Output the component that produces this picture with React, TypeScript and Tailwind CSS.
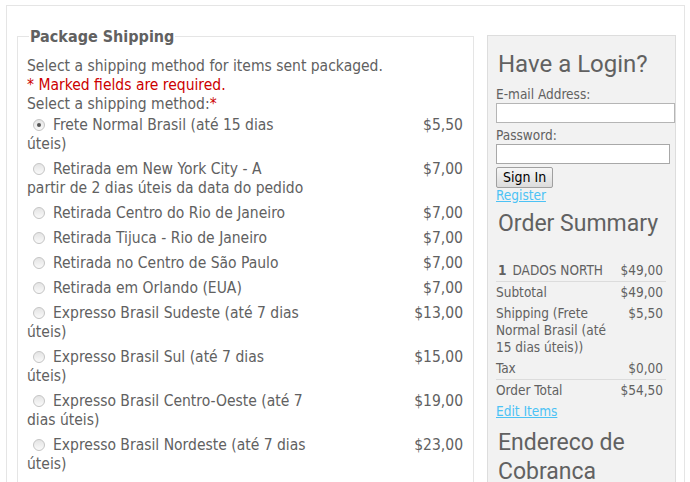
const options = [
  { lines: ["Frete Normal Brasil (até 15 dias", "úteis)"], price: "$5,50", checked: true },
  { lines: ["Retirada em New York City - A", "partir de 2 dias úteis da data do pedido"], price: "$7,00" },
  { lines: ["Retirada Centro do Rio de Janeiro"], price: "$7,00" },
  { lines: ["Retirada Tijuca - Rio de Janeiro"], price: "$7,00" },
  { lines: ["Retirada no Centro de São Paulo"], price: "$7,00" },
  { lines: ["Retirada em Orlando (EUA)"], price: "$7,00" },
  { lines: ["Expresso Brasil Sudeste (até 7 dias", "úteis)"], price: "$13,00" },
  { lines: ["Expresso Brasil Sul (até 7 dias", "úteis)"], price: "$15,00" },
  { lines: ["Expresso Brasil Centro-Oeste (até 7", "dias úteis)"], price: "$19,00" },
  { lines: ["Expresso Brasil Nordeste (até 7 dias", "úteis)"], price: "$23,00" },
];

function Radio({ checked }: { checked?: boolean }) {
  return (
    <span className="relative inline-block align-[-1px] ml-[6px] mr-[8px] w-[12px] h-[12px] rounded-full border border-[#c4c4c4] bg-gradient-to-b from-[#e4e4e4] to-[#fafafa]">
      {checked && (
        <span className="absolute left-[3px] top-[3px] w-[4px] h-[4px] rounded-full bg-[#555]" />
      )}
    </span>
  );
}

const heading = { fontFamily: 'Roboto, "Liberation Sans", sans-serif' };

export default function App() {
  return (
    <div
      className="bg-white w-[690px] h-[482px] overflow-hidden text-[#616161]"
      style={{ fontFamily: '"DejaVu Sans Condensed", "Liberation Sans", sans-serif' }}
    >
      <div className="ml-[6px] mt-[5px] w-[679px] h-[500px] border border-[#e5e5e5] flex items-start pl-[10px] pt-[21px]">
        {/* shipping methods */}
        <fieldset className="w-[457px] border border-[#e5e5e5] pl-[9px] pr-[10px] pb-[10px]">
          <legend className="ml-[2px] px-[1px] text-[16px] leading-[19px] font-bold">Package Shipping</legend>
          <div className="text-[15.5px] leading-[19px] pt-[11px]">
            <p>Select a shipping method for items sent packaged.</p>
            <p className="text-[#cc0000]">* Marked fields are required.</p>
            <p>
              Select a shipping method:<span className="text-[#cc0000]">*</span>
            </p>
            <div className="-mt-[1px]">
              {options.map((o) => (
                <div key={o.lines[0]} className="flex justify-between py-[3px]">
                  <div className="whitespace-nowrap">
                    <Radio checked={o.checked} />
                    {o.lines[0]}
                    {o.lines[1] && (
                      <>
                        <br />
                        {o.lines[1]}
                      </>
                    )}
                  </div>
                  <div>{o.price}</div>
                </div>
              ))}
            </div>
          </div>
        </fieldset>

        {/* sidebar */}
        <div className="ml-[13px] mt-[8px] w-[189px] h-[470px] bg-[#f2f2f2] border border-[#dddddd] px-[8px] pt-[13px]">
          <h2 className="text-[24px] leading-[30px] pl-[2px] whitespace-nowrap" style={heading}>Have a Login?</h2>
          <div className="text-[13.5px] leading-[17px] mt-[7px]">
            <div>E-mail Address:</div>
            <input className="block w-[179px] h-[20px] border border-[#b5b5b5] bg-white" />
            <div className="mt-[4px]">Password:</div>
            <input className="block w-[174px] h-[20px] border border-[#a8a8a8] bg-white" />
            <button className="mt-[3px] h-[21px] px-[6px] border border-[#a0a0a0] rounded-[2px] bg-gradient-to-b from-[#f6f6f6] to-[#dcdcdc] text-black text-[14px] leading-[17px]">
              Sign In
            </button>
            <div className="-mt-[1px]">
              <a className="text-[#4cc2f5] underline">Register</a>
            </div>
          </div>
          <h2 className="text-[23px] leading-[30px] mt-[5px] pl-[2px] whitespace-nowrap" style={heading}>Order Summary</h2>
          <div className="w-[170px] mt-[21px] text-[13.5px] leading-[17px]">
            <div className="flex justify-between py-[2px] pr-[3px] border-b border-[#dcdcdc]">
              <span>
                <b className="mr-[6px] pl-[2px]">1</b>DADOS NORTH
              </span>
              <span>$49,00</span>
            </div>
            <div className="flex justify-between py-[2px] pr-[3px]">
              <span>Subtotal</span>
              <span>$49,00</span>
            </div>
            <div className="flex justify-between py-[2px] pr-[3px]">
              <span className="w-[120px]">Shipping (Frete Normal Brasil (até 15 dias úteis))</span>
              <span>$5,50</span>
            </div>
            <div className="flex justify-between py-[2px] pr-[3px] border-b border-[#dcdcdc]">
              <span>Tax</span>
              <span>$0,00</span>
            </div>
            <div className="flex justify-between py-[2px] pr-[3px]">
              <span>Order Total</span>
              <span>$54,50</span>
            </div>
            <a className="block mt-[2px] text-[#4cc2f5] underline">Edit Items</a>
          </div>
          <h2 className="text-[23px] leading-[29px] mt-[8px] pl-[2px] w-[150px]" style={heading}>Endereco de Cobranca</h2>
        </div>
      </div>
    </div>
  );
}
